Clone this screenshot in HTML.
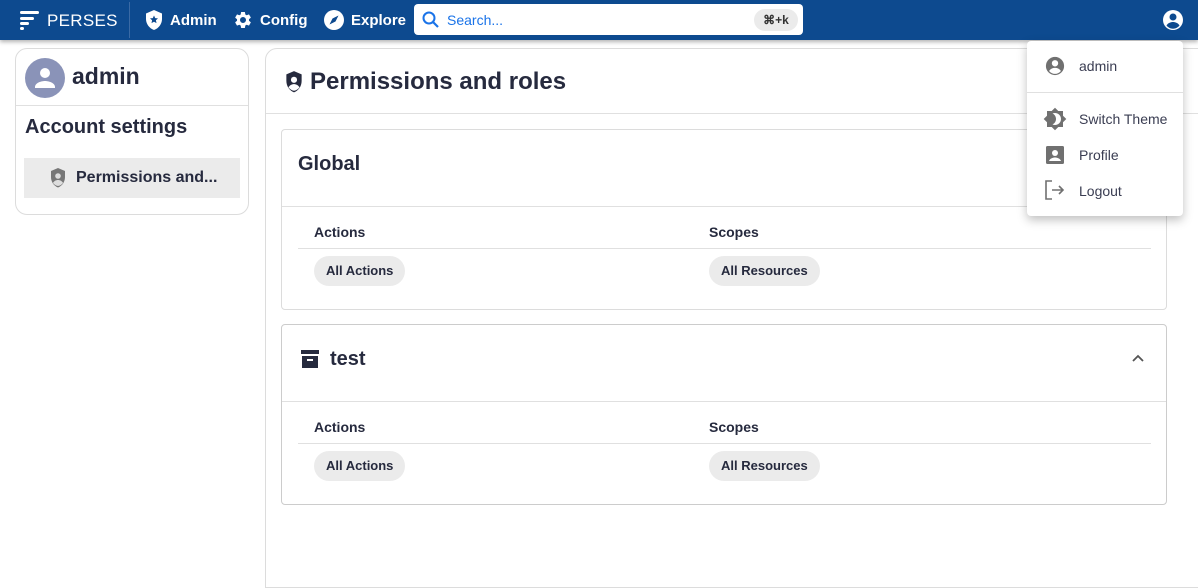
<!DOCTYPE html>
<html><head><meta charset="utf-8"><style>
*{box-sizing:border-box;margin:0;padding:0}
body{width:1198px;height:557px;overflow:hidden;background:#fff;font-family:"Liberation Sans",Arial,sans-serif;color:#262a3e;position:relative}
.hdr{position:absolute;left:0;top:0;width:1198px;height:40px;background:#0d4a8f;box-shadow:0 2px 4px rgba(0,0,0,.3);z-index:2}
.ab{position:absolute}
.nav{position:absolute;top:12px;color:#fff;font-weight:bold;font-size:15px}
.card{position:absolute;border:1px solid #dcdcdc;background:#fff}
.chip{position:absolute;height:30px;border-radius:15px;background:#ebebeb;font-size:13px;font-weight:bold;line-height:30px;padding:0 12px;color:#262a3e}
.th{position:absolute;font-size:14px;font-weight:bold}
.hl{position:absolute;height:1px;background:#e0e0e0}
.mi{position:absolute;left:52px;font-size:14px;color:#3a3d52}
</style></head><body>
<div class="hdr">
 <svg class="ab" style="left:19px;top:10px" width="22" height="20" viewBox="0 0 22 20"><g fill="#fff"><rect x="1" y="1" width="19" height="3" rx="1.5"/><rect x="1" y="7" width="14" height="3" rx="1.5"/><rect x="1" y="12" width="9" height="3" rx="1.5"/><rect x="1" y="17" width="4" height="3" rx="1.5"/></g></svg>
 <div class="ab" style="left:47px;top:11px;color:#fff;font-size:17px;letter-spacing:.3px">PERSES</div>
 <div class="ab" style="left:129px;top:2px;width:1px;height:36px;background:#3a6aa5"></div>
 <svg class="ab" style="left:144px;top:9px" width="20" height="22" viewBox="0 0 20 22"><path d="M10 1 L18 4.5 V10 C18 15 14.5 19.5 10 21 C5.5 19.5 2 15 2 10 V4.5Z" fill="#fff"/><path d="M10 6.5l1.2 2.6 2.8.3-2.1 1.9.6 2.8L10 12.7 7.5 14.1l.6-2.8L6 9.4l2.8-.3z" fill="#0d4a8f"/></svg>
 <div class="nav" style="left:170px">Admin</div>
 <svg class="ab" style="left:233px;top:10px" width="20" height="20" viewBox="0 0 24 24"><path fill="#fff" d="M19.14 12.94c.04-.3.06-.61.06-.94 0-.32-.02-.64-.07-.94l2.03-1.58a.49.49 0 0 0 .12-.61l-1.92-3.32a.49.49 0 0 0-.59-.22l-2.39.96c-.5-.38-1.030-.7-1.62-.94l-.36-2.54a.48.48 0 0 0-.48-.41h-3.84c-.24 0-.43.17-.47.41l-.36 2.54c-.59.24-1.13.57-1.62.94l-2.39-.96a.48.48 0 0 0-.59.22L2.74 8.87c-.12.21-.08.47.12.61l2.03 1.58c-.05.3-.09.63-.09.94s.02.64.07.94l-2.03 1.58a.49.49 0 0 0-.12.61l1.920 3.32c.12.22.37.29.59.22l2.39-.96c.5.38 1.03.7 1.62.94l.36 2.54c.05.24.24.41.48.41h3.84c.24 0 .44-.17.47-.41l.36-2.54c.59-.24 1.13-.56 1.62-.94l2.39.96c.22.08.47 0 .59-.22l1.92-3.32c.12-.22.07-.47-.12-.61zM12 15.6A3.6 3.6 0 1 1 12 8.4a3.6 3.6 0 0 1 0 7.2z"/></svg>
 <div class="nav" style="left:260px">Config</div>
 <svg class="ab" style="left:324px;top:10px" width="20" height="20" viewBox="0 0 20 20"><circle cx="10" cy="10" r="10" fill="#fff"/><path d="M14.5 5.5 L11.5 11.5 L5.5 14.5 L8.5 8.5Z" fill="#0d4a8f"/></svg>
 <div class="nav" style="left:351px">Explore</div>
 <div class="ab" style="left:414px;top:4px;width:389px;height:31px;background:#fff;border-radius:4px"></div>
 <svg class="ab" style="left:421px;top:10px" width="20" height="20" viewBox="0 0 20 20"><circle cx="8" cy="8" r="5.5" fill="none" stroke="#1a73e8" stroke-width="2"/><path d="M12 12l5 5" stroke="#1a73e8" stroke-width="2.2"/></svg>
 <div class="ab" style="left:447px;top:12px;font-size:14px;color:#1a73e8">Search...</div>
 <div class="ab" style="left:754px;top:9px;width:44px;height:22px;background:#ebebeb;border-radius:11px;font-size:12px;font-weight:bold;line-height:22px;text-align:center;color:#333">⌘+k</div>
 <svg class="ab" style="left:1162px;top:9px" width="22" height="22" viewBox="0 0 22 22"><circle cx="11" cy="11" r="10" fill="#fff"/><circle cx="11" cy="8" r="3.5" fill="#0d4a8f"/><path d="M4.5 16.5c1.5-2.5 4-3.5 6.5-3.5s5 1 6.5 3.5c-1.7 2-4 3.2-6.5 3.2s-4.8-1.2-6.5-3.2z" fill="#0d4a8f"/></svg>
</div>

<div class="card" style="left:15px;top:48px;width:234px;height:167px;border-radius:12px">
 <svg class="ab" style="left:9px;top:9px" width="40" height="40" viewBox="0 0 40 40"><circle cx="20" cy="20" r="20" fill="#8a93b8"/><circle cx="20" cy="15" r="5" fill="#fff"/><path d="M10 29c0-4 6-6 10-6s10 2 10 6v1H10z" fill="#fff"/></svg>
 <div class="ab" style="left:56px;top:14px;font-size:23px;font-weight:bold">admin</div>
 <div class="hl" style="left:0;top:56px;width:232px"></div>
 <div class="ab" style="left:9px;top:67px;font-size:20px;font-weight:bold">Account settings</div>
 <div class="ab" style="left:8px;top:109px;width:216px;height:40px;background:#ebebeb"></div>
 <svg class="ab" style="left:33px;top:118px" width="18" height="22" viewBox="0 0 18 22"><path d="M9 1L16 4V10C16 15 13 19 9 20.5 5 19 2 15 2 10V4Z" fill="#777"/><circle cx="9" cy="9" r="2.8" fill="#ddd"/><path d="M4 16c1-2 3-3 5-3s4 1 5 3c-1.3 1.6-3 2.6-5 3-2-.4-3.7-1.4-5-3z" fill="#ddd"/></svg>
 <div class="ab" style="left:60px;top:120px;font-size:16px;font-weight:bold">Permissions and...</div>
</div>

<div class="card" style="left:265px;top:48px;width:960px;height:540px;border-radius:12px 12px 0 0">
 <svg class="ab" style="left:18px;top:21px" width="20" height="24" viewBox="0 0 18 22"><path d="M9 1L16 4V10C16 15 13 19 9 20.5 5 19 2 15 2 10V4Z" fill="#262a3e"/><circle cx="9" cy="9" r="2.8" fill="#fff"/><path d="M4 16c1-2 3-3 5-3s4 1 5 3c-1.3 1.6-3 2.6-5 3-2-.4-3.7-1.4-5-3z" fill="#fff"/></svg>
 <div class="ab" style="left:44px;top:19px;font-size:24px;font-weight:bold">Permissions and roles</div>
 <div class="hl" style="left:0;top:64px;width:960px"></div>
</div>

<div class="card" style="left:281px;top:129px;width:886px;height:181px;border-radius:4px">
 <div class="ab" style="left:16px;top:23px;font-size:20px;font-weight:bold">Global</div>
 <div class="hl" style="left:0;top:76px;width:884px"></div>
 <div class="th" style="left:32px;top:94px">Actions</div>
 <div class="th" style="left:427px;top:94px">Scopes</div>
 <div class="hl" style="left:16px;top:118px;width:853px"></div>
 <div class="chip" style="left:32px;top:126px">All Actions</div>
 <div class="chip" style="left:427px;top:126px">All Resources</div>
</div>

<div class="card" style="left:281px;top:324px;width:886px;height:181px;border-radius:4px;border-color:#ccc">
 <svg class="ab" style="left:19px;top:25px" width="18" height="18" viewBox="0 0 18 18"><rect x="0" y="0" width="18" height="4" fill="#262a3e"/><rect x="1" y="6" width="16" height="12" fill="#262a3e"/><rect x="6" y="9" width="6" height="2" fill="#fff"/></svg>
 <div class="ab" style="left:48px;top:23px;font-size:20px;font-weight:bold">test</div>
 <svg class="ab" style="left:849px;top:28px" width="14" height="10" viewBox="0 0 14 10"><path d="M2 8L7 3l5 5" fill="none" stroke="#555" stroke-width="1.8"/></svg>
 <div class="hl" style="left:0;top:76px;width:884px"></div>
 <div class="th" style="left:32px;top:94px">Actions</div>
 <div class="th" style="left:427px;top:94px">Scopes</div>
 <div class="hl" style="left:16px;top:118px;width:853px"></div>
 <div class="chip" style="left:32px;top:126px">All Actions</div>
 <div class="chip" style="left:427px;top:126px">All Resources</div>
</div>

<div class="ab" style="left:1027px;top:41px;width:156px;height:175px;background:#fff;border-radius:4px;box-shadow:0 4px 10px rgba(0,0,0,.25);z-index:3">
 <svg class="ab" style="left:18px;top:15px" width="20" height="20" viewBox="0 0 22 22"><circle cx="11" cy="11" r="10" fill="#707070"/><circle cx="11" cy="8" r="3.5" fill="#fff"/><path d="M4.5 16.5c1.5-2.5 4-3.5 6.5-3.5s5 1 6.5 3.5c-1.7 2-4 3.2-6.5 3.2s-4.8-1.2-6.5-3.2z" fill="#fff"/></svg>
 <div class="mi" style="top:17px">admin</div>
 <div class="hl" style="left:0;top:51px;width:156px"></div>
 <svg class="ab" style="left:16px;top:66px" width="24" height="24" viewBox="0 0 24 24"><path fill="#707070" d="M20 8.69V4h-4.69L12 .69 8.69 4H4v4.69L.69 12 4 15.31V20h4.69L12 23.31 15.31 20H20v-4.69L23.31 12 20 8.69zM12 18c-.89 0-1.74-.2-2.5-.55C11.56 16.5 13 14.42 13 12s-1.44-4.5-3.5-5.45C10.26 6.2 11.11 6 12 6c3.310 0 6 2.690 6 6s-2.69 6-6 6z"/></svg>
 <div class="mi" style="top:70px">Switch Theme</div>
 <svg class="ab" style="left:18px;top:104px" width="20" height="20" viewBox="0 0 20 20"><rect x="1" y="1" width="18" height="18" rx="1.5" fill="#707070"/><circle cx="10" cy="8" r="3" fill="#fff"/><path d="M4 16c1-2.5 3.5-3.5 6-3.5s5 1 6 3.5z" fill="#fff"/></svg>
 <div class="mi" style="top:106px">Profile</div>
 <svg class="ab" style="left:17px;top:139px" width="22" height="20" viewBox="0 0 22 20"><path d="M8 1H2v18h6" fill="none" stroke="#707070" stroke-width="1.6"/><path d="M8 10h11M15 6l4 4-4 4" fill="none" stroke="#707070" stroke-width="1.6"/></svg>
 <div class="mi" style="top:142px">Logout</div>
</div>
</body></html>
